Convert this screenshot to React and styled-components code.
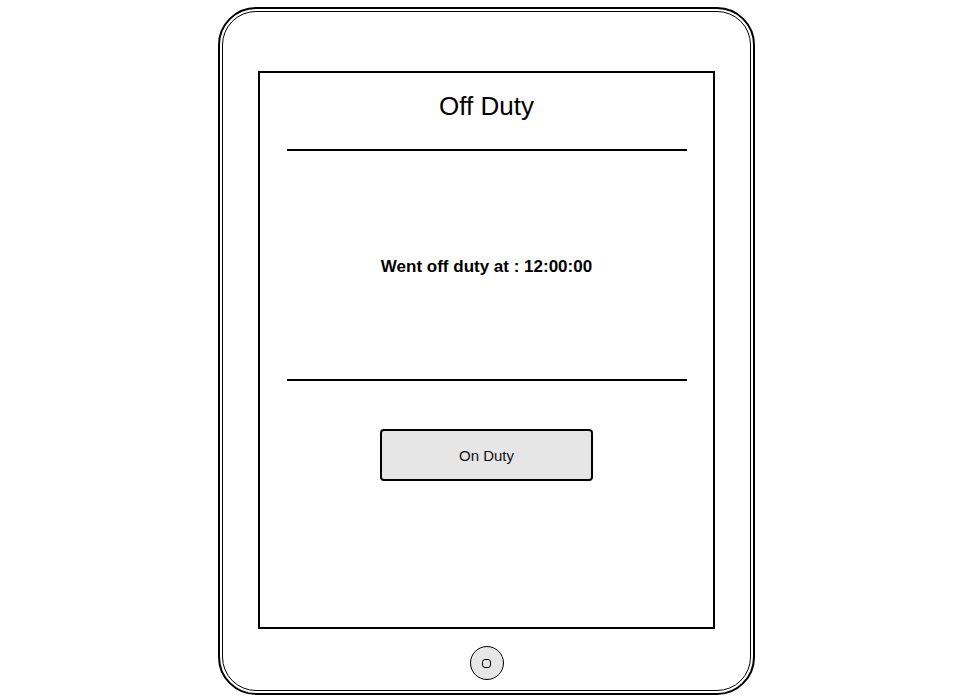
import styled, { createGlobalStyle } from "styled-components";

const GlobalStyle = createGlobalStyle`
  html, body {
    margin: 0;
    background: #ffffff;
    font-family: "Liberation Sans", Arial, sans-serif;
  }
`;

// 페이지
const Page = styled.div`
  width: 960px;
  height: 700px;
  display: flex;
  justify-content: center;
  padding: 7px 0 0 13px;
  box-sizing: border-box;
`;

// 태블릿 바깥 테두리
const Tablet = styled.div`
  width: 537px;
  height: 688px;
  box-sizing: border-box;
  border: 2px solid #000;
  border-radius: 38px;
  padding: 2px;
`;

// 태블릿 안쪽 테두리
const TabletInner = styled.div`
  height: 100%;
  box-sizing: border-box;
  border: 1px solid #000;
  border-radius: 34px;
  display: flex;
  flex-direction: column;
  align-items: center;
  padding-top: 59px;
`;

// 화면
const Screen = styled.div`
  width: 457px;
  height: 558px;
  box-sizing: border-box;
  border: 2px solid #000;
  display: flex;
  flex-direction: column;
  align-items: center;
  padding-top: 18px;
`;

const Title = styled.div`
  font-size: 26px;
  line-height: 30px;
  color: #000;
`;

const Divider = styled.div`
  width: 400px;
  height: 2px;
  background: #000;
  margin-top: ${(props) => props.top || 0}px;
`;

const Message = styled.div`
  height: 228px;
  display: flex;
  align-items: center;
  padding-top: 3px;
  box-sizing: border-box;
  font-size: 17px;
  font-weight: bold;
  color: #000;
`;

const DutyButton = styled.button`
  margin-top: 48px;
  width: 213px;
  height: 52px;
  box-sizing: border-box;
  background: #e6e6e6;
  border: 2px solid #000;
  border-radius: 4px;
  font-family: "Liberation Sans", Arial, sans-serif;
  font-size: 15px;
  color: #111;
  padding: 0;
  cursor: pointer;
`;

// 홈 버튼
const HomeButton = styled.div`
  margin-top: 17px;
  width: 34px;
  height: 34px;
  box-sizing: border-box;
  border: 1px solid #000;
  border-radius: 50%;
  background: #e6e6e6;
  display: flex;
  align-items: center;
  justify-content: center;
`;

const HomeSquare = styled.div`
  width: 9px;
  height: 9px;
  box-sizing: border-box;
  border: 1px solid #000;
  border-radius: 3px;
`;

export default function App() {
  return (
    <>
      <GlobalStyle />
      <Page>
        <Tablet>
          <TabletInner>
            <Screen>
              <Title>Off Duty</Title>
              <Divider top={28} />
              <Message>Went off duty at : 12:00:00</Message>
              <Divider />
              <DutyButton>On Duty</DutyButton>
            </Screen>
            <HomeButton>
              <HomeSquare />
            </HomeButton>
          </TabletInner>
        </Tablet>
      </Page>
    </>
  );
}
